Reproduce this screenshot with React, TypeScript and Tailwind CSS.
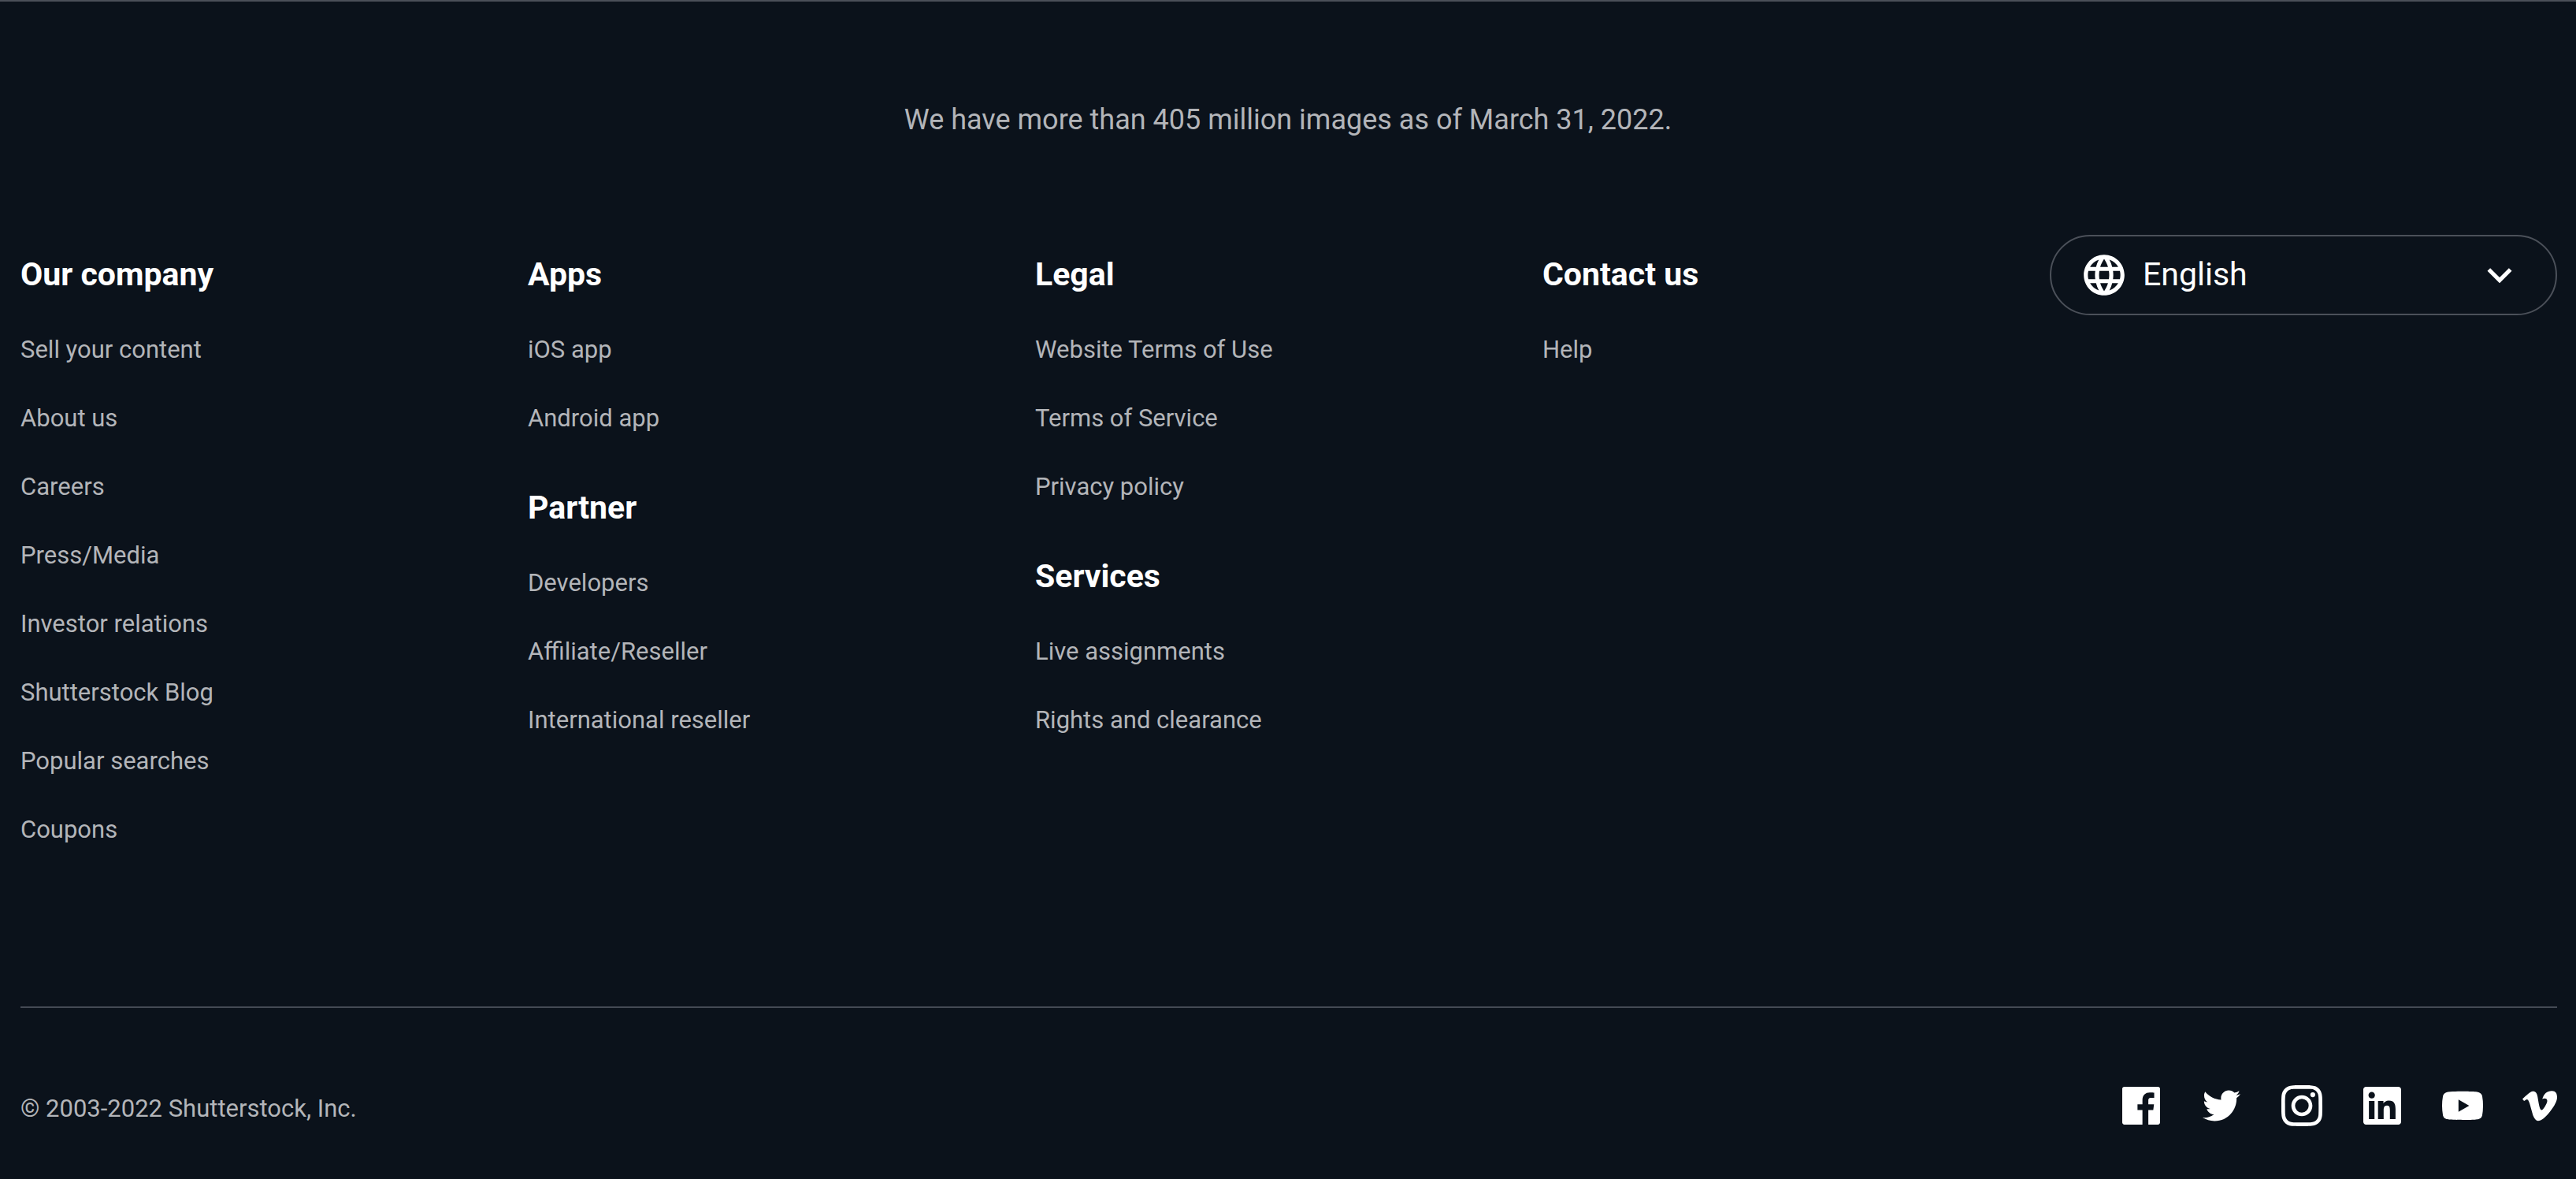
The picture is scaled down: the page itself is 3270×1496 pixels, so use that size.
import React from "react";
import { SiInstagram } from "react-icons/si";
import { FaVimeoV } from "react-icons/fa";
import { MdExpandMore, MdLanguage } from "react-icons/md";

const columns: { title: string; links: string[] }[][] = [
  [
    {
      title: "Our company",
      links: [
        "Sell your content",
        "About us",
        "Careers",
        "Press/Media",
        "Investor relations",
        "Shutterstock Blog",
        "Popular searches",
        "Coupons",
      ],
    },
  ],
  [
    { title: "Apps", links: ["iOS app", "Android app"] },
    { title: "Partner", links: ["Developers", "Affiliate/Reseller", "International reseller"] },
  ],
  [
    { title: "Legal", links: ["Website Terms of Use", "Terms of Service", "Privacy policy"] },
    { title: "Services", links: ["Live assignments", "Rights and clearance"] },
  ],
  [{ title: "Contact us", links: ["Help"] }],
];

function Social({ label, children }: { label: string; children: React.ReactNode }) {
  return (
    <a href="#" aria-label={label} className="flex h-[52px] items-center justify-center">
      {children}
    </a>
  );
}

export default function App() {
  return (
    <footer className="min-h-screen border-t-2 border-[#4b5059] bg-[#0b121b] font-[Roboto,sans-serif] text-[31px] text-[#b3b5b9]">
      <p className="pt-[120px] text-center text-[36px] leading-[60px]">
        We have more than 405 million images as of March 31, 2022.
      </p>
      <div className="pr-6 pl-[26px]">
        <div className="mt-[116px] grid grid-cols-5 border-b-2 border-[#444a54] pb-[181px]">
          {columns.map((column) => (
            <div key={column[0].title} className="flex flex-col gap-[42px] pt-[22px]">
              {column.map((group) => (
                <section key={group.title}>
                  <h2 className="pb-6 text-[41px] leading-[56px] font-bold text-white">{group.title}</h2>
                  <ul>
                    {group.links.map((link) => (
                      <li key={link} className="leading-[87px]">
                        <a href="#">{link}</a>
                      </li>
                    ))}
                  </ul>
                </section>
              ))}
            </div>
          ))}
          <button
            type="button"
            className="flex h-[102px] items-center self-start rounded-full border-2 border-[#4b5059] px-9 text-[41px] text-white"
          >
            <MdLanguage className="size-[62px] shrink-0" aria-hidden="true" />
            <span className="ml-[18px]">English</span>
            <MdExpandMore className="mr-1 ml-auto size-[62px] shrink-0" aria-hidden="true" />
          </button>
        </div>
        <div className="flex items-start justify-between pt-[98px]">
          <p className="leading-[60px]">© 2003-2022 Shutterstock, Inc.</p>
          <div className="flex items-center gap-[50px] fill-white text-white">
            <Social label="Facebook">
              <svg viewBox="-1 -1 26 26" className="size-[52px]">
                <path d="M22.676 0H1.324C.593 0 0 .593 0 1.324v21.352C0 23.408.593 24 1.324 24h11.494v-9.294H9.689v-3.621h3.129V8.41c0-3.099 1.894-4.785 4.659-4.785 1.325 0 2.464.097 2.796.141v3.24h-1.921c-1.5 0-1.792.721-1.792 1.771v2.311h3.584l-.465 3.63H16.56V24h6.115c.733 0 1.325-.592 1.325-1.324V1.324C24 .593 23.408 0 22.676 0" />
              </svg>
            </Social>
            <Social label="Twitter">
              <svg viewBox="-1 -1 26 26" className="size-[52px]">
                <path d="M23.954 4.569c-.885.389-1.83.654-2.825.775 1.014-.611 1.794-1.574 2.163-2.723-.951.555-2.005.959-3.127 1.184-.896-.959-2.173-1.559-3.591-1.559-2.717 0-4.92 2.203-4.92 4.917 0 .39.045.765.127 1.124C7.691 8.094 4.066 6.13 1.64 3.161c-.427.722-.666 1.561-.666 2.475 0 1.71.87 3.213 2.188 4.096-.807-.026-1.566-.248-2.228-.616v.061c0 2.385 1.693 4.374 3.946 4.827-.413.111-.849.171-1.296.171-.314 0-.615-.03-.916-.086.631 1.953 2.445 3.377 4.604 3.417-1.68 1.319-3.809 2.105-6.102 2.105-.39 0-.779-.023-1.17-.067 2.189 1.394 4.768 2.209 7.557 2.209 9.054 0 13.999-7.496 13.999-13.986 0-.209 0-.42-.015-.63.961-.689 1.8-1.56 2.46-2.548l-.047-.02z" />
              </svg>
            </Social>
            <Social label="Instagram">
              <SiInstagram className="size-[52px]" />
            </Social>
            <Social label="LinkedIn">
              <svg viewBox="-1 -1 26 26" className="size-[52px]">
                <path d="M20.447 20.452h-3.554v-5.569c0-1.328-.027-3.037-1.852-3.037-1.853 0-2.136 1.445-2.136 2.939v5.667H9.351V9h3.414v1.561h.046c.477-.9 1.637-1.85 3.37-1.85 3.601 0 4.267 2.37 4.267 5.455v6.286zM5.337 7.433c-1.144 0-2.063-.926-2.063-2.065 0-1.138.92-2.063 2.063-2.063 1.14 0 2.064.925 2.064 2.063 0 1.139-.925 2.065-2.064 2.065zm1.782 13.019H3.555V9h3.564v11.452zM22.225 0H1.771C.792 0 0 .774 0 1.729v20.542C0 23.227.792 24 1.771 24h20.451C23.2 24 24 23.227 24 22.271V1.729C24 .774 23.2 0 22.222 0h.003z" />
              </svg>
            </Social>
            <Social label="YouTube">
              <svg viewBox="0 0 24 24" className="size-[52px]">
                <path d="M23.495 6.205a3.007 3.007 0 0 0-2.088-2.088c-1.87-.501-9.396-.501-9.396-.501s-7.507-.01-9.396.501A3.007 3.007 0 0 0 .527 6.205a31.247 31.247 0 0 0-.522 5.805 31.247 31.247 0 0 0 .522 5.783 3.007 3.007 0 0 0 2.088 2.088c1.868.502 9.396.502 9.396.502s7.506 0 9.396-.502a3.007 3.007 0 0 0 2.088-2.088 31.247 31.247 0 0 0 .5-5.783 31.247 31.247 0 0 0-.5-5.805zM9.609 15.601V8.408l6.264 3.602z" />
              </svg>
            </Social>
            <Social label="Vimeo">
              <FaVimeoV className="h-[52px] w-11" />
            </Social>
          </div>
        </div>
      </div>
    </footer>
  );
}
